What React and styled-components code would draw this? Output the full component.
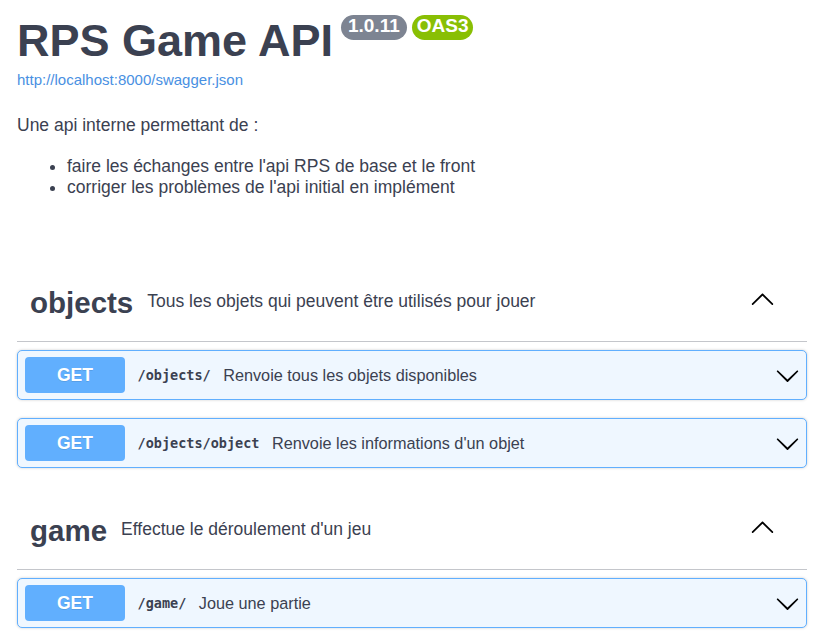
import styled, { createGlobalStyle } from 'styled-components'

const GlobalStyle = createGlobalStyle`
  body {
    margin: 0;
    background: #fff;
    font-family: "Liberation Sans", Arial, sans-serif;
    color: #3b4151;
  }
`;

const Page = styled.div`
  padding: 16px 20px 0 17px;
`;

const TitleRow = styled.div`
  display: flex;
  align-items: flex-start;
`;

const Title = styled.h2`
  margin: 0;
  font-size: 45px;
  line-height: 50px;
  font-weight: 700;
  color: #3b4151;
`;

const Badges = styled.div`
  display: flex;
  gap: 5px;
  margin-left: 8px;
  margin-top: -1px;
`;

const Badge = styled.span`
  display: inline-block;
  padding: 1px ${p => p.$pad}px 5px;
  border-radius: 57px;
  background: ${p => p.$bg};
  color: #fff;
  font-size: 19px;
  line-height: 19px;
  font-weight: 700;
`;

const SpecLink = styled.a`
  display: block;
  margin-top: 5px;
  font-size: 15px;
  line-height: 17px;
  color: #4990e2;
  text-decoration: none;
`;

const Description = styled.p`
  margin: 27px 0 0;
  font-size: 17.5px;
  line-height: 21px;
`;

const List = styled.ul`
  margin: 20px 0 0;
  padding-left: 50px;
  font-size: 17.5px;
  line-height: 21px;
`;

const Section = styled.section`
  margin-bottom: 24px;

  &:first-of-type {
    margin-top: 66px;
  }
`;

const TagHeader = styled.div`
  display: flex;
  align-items: center;
  height: 78px;
  box-sizing: border-box;
  padding: 0 32px 0 13px;
  border-bottom: 1px solid #c4c6cb;
`;

const TagName = styled.h3`
  margin: 0;
  font-size: 29.5px;
  line-height: 34px;
  font-weight: 700;
  color: #3b4151;
`;

const TagText = styled.small`
  flex: 1;
  padding-left: 14px;
  font-size: 17.5px;
  line-height: 21px;
  margin-bottom: 3px;
`;

const ArrowButton = styled.span`
  display: flex;
  width: 25px;
  height: 25px;
  margin-bottom: ${p => p.$lift || 0}px;
  margin-left: auto;
`;

const OpList = styled.div`
  display: flex;
  flex-direction: column;
  gap: 18px;
  padding-top: 8px;
`;

const Opblock = styled.div`
  display: flex;
  align-items: center;
  height: 50px;
  box-sizing: border-box;
  padding: 6px 6px 6px 7px;
  border: 1px solid #61affe;
  border-radius: 5px;
  background: #eff7ff;
  box-shadow: 0 0 3px rgba(0, 0, 0, 0.19);
`;

const Method = styled.span`
  display: flex;
  align-items: center;
  justify-content: center;
  width: 100px;
  height: 36px;
  border-radius: 4px;
  background: #61affe;
  color: #fff;
  font-size: 17.5px;
  font-weight: 700;
  text-shadow: 0 1px 0 rgba(0, 0, 0, 0.1);
`;

const Path = styled.span`
  padding: 0 12.5px;
  font-family: "DejaVu Sans Mono", monospace;
  font-size: 13.5px;
  font-weight: 700;
  color: #3b4151;
`;

const Summary = styled.span`
  font-size: 16.25px;
  color: #3b4151;
`;

function ArrowUp() {
  return (
    <svg width="25" height="25" viewBox="0 0 20 20">
      <path
        fill="#000"
        d="M17.418 14.908c.272.268.709.268.979 0s.271-.701 0-.969l-7.908-7.83c-.27-.268-.707-.268-.979 0l-7.908 7.83c-.27.268-.27.701 0 .969.271.268.709.268.979 0L10 7.767l7.418 7.141z"
      />
    </svg>
  )
}

function ArrowDown() {
  return (
    <svg width="25" height="25" viewBox="0 0 20 20">
      <path
        fill="#000"
        d="M17.418 6.109c.272-.268.709-.268.979 0s.271.701 0 .969l-7.908 7.83c-.27.268-.707.268-.979 0l-7.908-7.83c-.27-.268-.27-.701 0-.969.271-.268.709-.268.979 0L10 13.25l7.418-7.141z"
      />
    </svg>
  )
}

const sections = [
  {
    name: 'objects',
    text: 'Tous les objets qui peuvent être utilisés pour jouer',
    ops: [
      { path: '/objects/', summary: 'Renvoie tous les objets disponibles' },
      { path: '/objects/object', summary: "Renvoie les informations d'un objet" }
    ]
  },
  {
    name: 'game',
    text: "Effectue le déroulement d'un jeu",
    ops: [{ path: '/game/', summary: 'Joue une partie' }]
  }
]

export default function App() {
  return (
    <Page>
      <GlobalStyle />
      <TitleRow>
        <Title>RPS Game API</Title>
        <Badges>
          <Badge $bg="#7d8492" $pad={7}>1.0.11</Badge>
          <Badge $bg="#89bf04" $pad={5}>OAS3</Badge>
        </Badges>
      </TitleRow>
      <SpecLink href="#">http://localhost:8000/swagger.json</SpecLink>
      <Description>Une api interne permettant de :</Description>
      <List>
        <li>faire les échanges entre l'api RPS de base et le front</li>
        <li>corriger les problèmes de l'api initial en implément</li>
      </List>

      {sections.map(section => (
        <Section key={section.name}>
          <TagHeader>
            <TagName>{section.name}</TagName>
            <TagText>{section.text}</TagText>
            <ArrowButton $lift={9}>
              <ArrowUp />
            </ArrowButton>
          </TagHeader>
          <OpList>
            {section.ops.map(op => (
              <Opblock key={op.path}>
                <Method>GET</Method>
                <Path>{op.path}</Path>
                <Summary>{op.summary}</Summary>
                <ArrowButton>
                  <ArrowDown />
                </ArrowButton>
              </Opblock>
            ))}
          </OpList>
        </Section>
      ))}
    </Page>
  )
}
